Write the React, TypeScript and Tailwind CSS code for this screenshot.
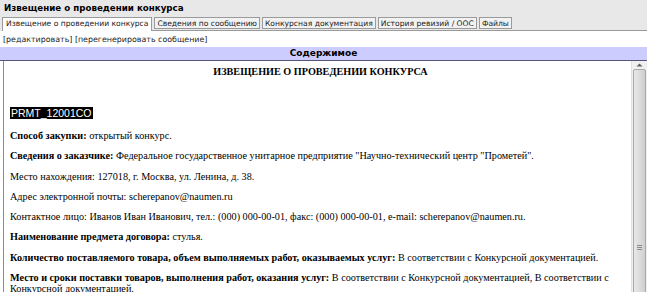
import React from "react";

const tabs = [
  "Извещение о проведении конкурса",
  "Сведения по сообщению",
  "Конкурсная документация",
  "История ревизий / ООС",
  "Файлы",
];

function Scrollbar() {
  return (
    <div className="flex w-[16px] shrink-0 flex-col border-l border-[#e0e0e0] bg-[#f0f0f0]">
      <div className="flex h-[8px] items-center justify-center">
        <svg width="7" height="4" viewBox="0 0 7 4">
          <path d="M0.5 3.5 L3.5 0.5 L6.5 3.5 Z" fill="#606060" />
        </svg>
      </div>
      <div className="mx-[1px] flex flex-1 flex-col items-center justify-end rounded-[2px] border border-[#a8a8a8] bg-gradient-to-r from-[#e8e8e8] via-[#dcdcdc] to-[#cfcfcf] pb-[50px]">
        <div className="flex flex-col gap-[1px]">
          <div className="h-px w-[5px] bg-[#8a8a8a]" />
          <div className="h-px w-[5px] bg-[#8a8a8a]" />
          <div className="h-px w-[5px] bg-[#8a8a8a]" />
        </div>
      </div>
    </div>
  );
}

export default function App() {
  return (
    <div className="h-[292px] w-[647px] overflow-hidden bg-white text-black font-['DejaVu_Sans',Verdana,sans-serif]">
      <div className="bg-[#e8e8e8] pl-[2px] pt-[2px]">
        <div className="h-[15px] pl-[2px] text-[8.7px] font-bold leading-[12px]">Извещение о проведении конкурса</div>
        <div className="flex items-end gap-[2px] border-b border-[#9a9a9a]">
          {tabs.map((t, i) => (
            <div
              key={t}
              className={
                i === 0
                  ? "-mb-px whitespace-nowrap border border-b-0 border-[#9a9a9a] bg-white px-[3px] pt-[1px] pb-[2px] text-[7.6px] leading-[10px] text-[#222]"
                  : "mb-[1px] whitespace-nowrap border border-[#9a9a9a] bg-[#f2f2f2] px-[2px] pt-[1px] text-[7.6px] leading-[9px] text-[#222]"
              }
            >
              {t}
            </div>
          ))}
        </div>
      </div>
      <div className="h-[16px] pl-[3px] pt-[3px] text-[7.9px] leading-[11px] text-[#222]">
        [редактировать] [перегенерировать сообщение]
      </div>
      <div className="h-[14px] border-b border-[#555577] bg-[#ccccff] text-center text-[9px] font-bold leading-[13px]">
        Содержимое
      </div>
      <div className="ml-[3px] flex h-[240px] border-l border-[#8c8c8c] bg-white">
        <div className="flex-1 pl-[6px] pt-[5px] font-['Liberation_Serif','Times_New_Roman',serif] text-[10.2px] leading-[11px]">
          <div className="text-center font-bold">ИЗВЕЩЕНИЕ О ПРОВЕДЕНИИ КОНКУРСА</div>
          <div className="mt-[31px] mb-[11px]">
            <span className="bg-black px-[1px] font-['Liberation_Sans',Arial,sans-serif] text-[10.5px] text-white">PRMT_12001CO</span>
          </div>
          <p className="mb-[9.3px]"><b>Способ закупки:</b> открытый конкурс.</p>
          <p className="mb-[9.3px]"><b>Сведения о заказчике:</b> Федеральное государственное унитарное предприятие "Научно-технический центр "Прометей".</p>
          <p className="mb-[9.3px]">Место нахождения: 127018, г. Москва, ул. Ленина, д. 38.</p>
          <p className="mb-[9.3px]">Адрес электронной почты: scherepanov@naumen.ru</p>
          <p className="mb-[9.3px]">Контактное лицо: Иванов Иван Иванович, тел.: (000) 000-00-01, факс: (000) 000-00-01, e-mail: scherepanov@naumen.ru.</p>
          <p className="mb-[9.3px]"><b>Наименование предмета договора:</b> стулья.</p>
          <p className="mb-[9.3px]"><b>Количество поставляемого товара, объем выполняемых работ, оказываемых услуг:</b> В соответствии с Конкурсной документацией.</p>
          <p className="mb-[9.3px] pr-[20px]"><b>Место и сроки поставки товаров, выполнения работ, оказания услуг:</b> В соответствии с Конкурсной документацией, В соответствии с Конкурсной документацией.</p>
        </div>
        <Scrollbar />
      </div>
    </div>
  );
}
